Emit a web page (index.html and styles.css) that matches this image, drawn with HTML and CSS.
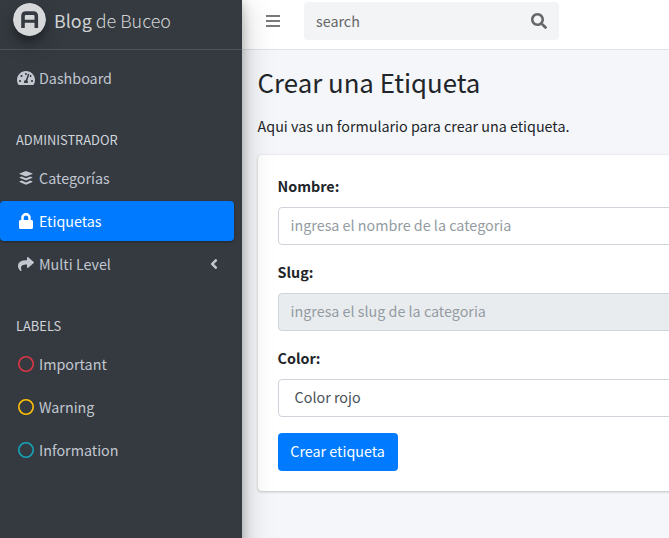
FILE: index.html
```html
<!DOCTYPE html>
<html lang="es">
<head>
<meta charset="utf-8">
<title>Blog de Buceo</title>
<link rel="stylesheet" href="styles.css">
</head>
<body>
<div class="wrapper">
  <aside class="sidebar">
    <a class="brand">
      <svg class="brand-logo" viewBox="0 0 33 33"><circle cx="16.5" cy="16.5" r="16.5" fill="#d5d7d9"/><path d="M10 25V13q0-2.900 2.900-2.900h7.500q2.900 0 2.900 2.900V25" fill="none" stroke="#343a40" stroke-width="3.600"/><path d="M10 18.300h13" stroke="#343a40" stroke-width="3"/></svg>
      <span class="brand-text"><b>Blog</b> de Buceo</span>
    </a>
    <nav class="menu">
      <a class="link"><svg viewBox="0 0 576 512" width="18" height="16"><path d="M288 32C128.940 32 0 160.940 0 320c0 52.800 14.250 102.260 39.060 144.800 5.610 9.620 16.300 15.200 27.440 15.200h443c11.140 0 21.830-5.580 27.440-15.200C561.750 422.260 576 372.800 576 320c0-159.060-128.940-288-288-288zm0 64c14.710 0 26.580 10.130 30.320 23.650-1.110 2.260-2.640 4.230-3.450 6.670l-9.220 27.670c-5.130 3.490-10.970 6.010-17.640 6.010-17.670 0-32-14.330-32-32S270.330 96 288 96zM96 384c-17.670 0-32-14.330-32-32s14.330-32 32-32 32 14.330 32 32-14.330 32-32 32zm48-160c-17.670 0-32-14.330-32-32s14.330-32 32-32 32 14.330 32 32-14.330 32-32 32zm246.770-72.410l-61.330 184C343.130 347.330 352 364.540 352 384c0 11.720-3.380 22.550-8.880 32H232.880c-5.500-9.450-8.880-20.280-8.880-32 0-33.940 26.500-61.430 59.900-63.590l61.340-184.010c4.170-12.560 17.730-19.450 30.360-15.170 12.570 4.190 19.350 17.790 15.170 30.360zm14.660 57.200l15.520-46.550c3.470-1.290 7.130-2.230 11.050-2.230 17.670 0 32 14.330 32 32s-14.330 32-32 32c-11.380-.010-20.890-6.280-26.570-15.220zM480 384c-17.670 0-32-14.330-32-32s14.330-32 32-32 32 14.330 32 32-14.330 32-32 32z"/></svg><span>Dashboard</span></a>
      <div class="heading">ADMINISTRADOR</div>
      <a class="link"><svg viewBox="0 0 14 16" width="14" height="16"><path d="M7 .9 13.500 3.500v.5L7 6.500.5 4v-.5z"/><path d="M.5 7.400 2.600 6.500 7 8.300l4.400-1.800 2.100.9v.4L7 10.500.5 7.800zM.5 11.500l2.100-.9L7 12.400l4.400-1.800 2.100.9v.4L7 14.700.5 11.900z"/></svg><span>Categorías</span></a>
      <a class="link active"><svg viewBox="0 0 448 512" width="14" height="16"><path d="M400 224h-24v-72C376 68.200 307.800 0 224 0S72 68.200 72 152v72H48c-26.500 0-48 21.500-48 48v192c0 26.500 21.500 48 48 48h352c26.500 0 48-21.500 48-48V272c0-26.500-21.500-48-48-48zm-104 0H152v-72c0-39.700 32.300-72 72-72s72 32.300 72 72v72z"/></svg><span>Etiquetas</span></a>
      <a class="link"><svg viewBox="0 0 512 512" width="16" height="16"><path d="M503.691 189.836L327.687 37.851C312.281 24.546 288 35.347 288 56.015v80.053C127.371 137.907 0 170.100 0 322.326c0 61.441 39.581 122.309 83.333 154.132 13.653 9.931 33.111-2.533 28.077-18.631C66.066 312.814 132.917 274.316 288 272.085V360c0 20.700 24.300 31.453 39.687 18.164l176.004-152c11.071-9.562 11.086-26.753 0-36.328z"/></svg><span>Multi Level</span><svg class="arrow" viewBox="0 0 256 512" width="8" height="16"><path d="M31.700 239l136-136c9.400-9.400 24.600-9.400 33.900 0l22.600 22.600c9.400 9.400 9.400 24.600 0 33.900L127.900 256l96.400 96.400c9.400 9.400 9.400 24.600 0 33.900L201.700 409c-9.400 9.400-24.600 9.400-33.900 0l-136-136c-9.500-9.400-9.500-24.600-.1-34z"/></svg></a>
      <div class="heading">LABELS</div>
      <a class="link"><svg class="ring danger" viewBox="0 0 16 16" width="16" height="16"><circle cx="8" cy="8" r="7.200"/></svg><span>Important</span></a>
      <a class="link"><svg class="ring warning" viewBox="0 0 16 16" width="16" height="16"><circle cx="8" cy="8" r="7.200"/></svg><span>Warning</span></a>
      <a class="link"><svg class="ring info" viewBox="0 0 16 16" width="16" height="16"><circle cx="8" cy="8" r="7.200"/></svg><span>Information</span></a>
    </nav>
  </aside>
  <div class="page">
    <header class="topbar">
      <svg class="bars" viewBox="0 0 14 12" width="14" height="12"><path d="M0 0h14v2H0zM0 5h14v2H0zM0 10h14v2H0z"/></svg>
      <div class="search"><span>search</span><svg viewBox="0 0 512 512" width="16" height="16"><path d="M505 442.700L405.300 343c-4.500-4.500-10.600-7-17-7H372c27.600-35.300 44-79.700 44-128C416 93.100 322.900 0 208 0S0 93.100 0 208s93.100 208 208 208c48.300 0 92.700-16.400 128-44v16.300c0 6.400 2.500 12.500 7 17l99.700 99.700c9.400 9.400 24.600 9.400 33.900 0l28.300-28.300c9.400-9.400 9.400-24.600.1-34zM208 336c-70.700 0-128-57.200-128-128 0-70.700 57.200-128 128-128 70.700 0 128 57.200 128 128 0 70.700-57.200 128-128 128z"/></svg></div>
    </header>
    <main class="content">
      <h1>Crear una Etiqueta</h1>
      <p>Aqui vas un formulario para crear una etiqueta.</p>
      <form class="card">
        <label>Nombre:</label>
        <div class="field">ingresa el nombre de la categoria</div>
        <label>Slug:</label>
        <div class="field readonly">ingresa el slug de la categoria</div>
        <label>Color:</label>
        <div class="field select">Color rojo</div>
        <button type="button" class="submit">Crear etiqueta</button>
      </form>
    </main>
  </div>
</div>
</body>
</html>
```
FILE: styles.css
```css
* { box-sizing: border-box; }
body {
  margin: 0;
  height: 538px;
  overflow: hidden;
  background: #f4f6f9;
  color: #212529;
  font: 14.32px/24px "Noto Sans CJK JP", "Noto Sans", sans-serif;
}
svg { fill: currentColor; }
.wrapper { display: flex; height: 538px; overflow: hidden; }

.sidebar {
  position: relative;
  z-index: 2;
  flex: none;
  width: 242px;
  height: 600px;
  margin-top: -7px;
  padding-top: 7px;
  background: #343a40;
  color: #c2c7d0;
  box-shadow: 0 14px 28px rgba(0,0,0,.25), 0 10px 10px rgba(0,0,0,.22);
}
.brand {
  display: flex;
  height: 50px;
  padding: 3px 0 0 13px;
  border-bottom: 1px solid #4b545c;
  color: #d0d2d3;
}
.brand-logo {
  width: 33px;
  height: 33px;
  border-radius: 50%;
  box-shadow: 0 10px 20px rgba(0,0,0,.19), 0 6px 6px rgba(0,0,0,.23);
}
.brand-text {
  margin-left: 8px;
  font-size: 17.9px;
  line-height: 34px;
  font-weight: 300;
}
.brand-text b { font-weight: 400; }
.menu { padding: 8px 8px 0 0; }
.link {
  display: grid;
  grid-template-columns: 20px 1fr auto;
  align-items: center;
  height: 40px;
  margin-bottom: 3px;
  padding-left: 16px;
  border-radius: 4px;
}
.link.active {
  background: #007bff;
  color: #fff;
  box-shadow: 0 1px 3px rgba(0,0,0,.12), 0 1px 2px rgba(0,0,0,.24);
}
.link > :first-child { justify-self: center; }
.link > span { margin-left: 3px; }
.arrow { margin-right: 16px; }
.heading {
  height: 57px;
  padding: 27px 16px 0;
  font-size: 12.89px;
  line-height: 24px;
  color: #d0d4db;
}
.ring { fill: none; stroke: currentColor; stroke-width: 1.6; }
.danger { color: #dc3545; }
.warning { color: #ffc107; }
.info { color: #17a2b8; }

.page { flex: 1; min-width: 0; }
.topbar {
  display: flex;
  height: 50px;
  padding: 2px 0 0 24px;
  background: #fff;
  border-bottom: 1px solid #dee2e6;
}
.bars { margin-top: 13px; color: #7a7a7a; }
.search {
  display: flex;
  align-items: center;
  justify-content: space-between;
  width: 255px;
  height: 38px;
  margin-left: 24px;
  padding: 0 12px;
  border-radius: 4px;
  background: #f2f4f6;
  color: #666;
}
.content { width: 480px; padding: 13px 0 0 15.6px; }
h1 { margin: 0; height: 38px; font-size: 25.8px; line-height: 38px; font-weight: 400; }
p { margin: 13px 0 17px; }
.card {
  height: 336px;
  padding: 19px 20px 20px;
  border-radius: 4px;
  background: #fff;
  box-shadow: 0 0 1px rgba(0,0,0,.125), 0 1px 3px rgba(0,0,0,.2);
}
label { display: block; margin-bottom: 9px; font-weight: 700; }
.field {
  height: 38px;
  margin-bottom: 15px;
  padding: 5px 12px;
  border: 1px solid #ced4da;
  border-radius: 4px;
  color: #939ba2;
}
.readonly { background: #e9ecef; }
.select { margin-bottom: 16px; padding-left: 16px; color: #495057; }
.submit {
  display: block;
  width: 120px;
  height: 38px;
  padding: 0 0 2px;
  border: 0;
  border-radius: 4px;
  background: #007bff;
  color: #fff;
  font: inherit;
}
```
